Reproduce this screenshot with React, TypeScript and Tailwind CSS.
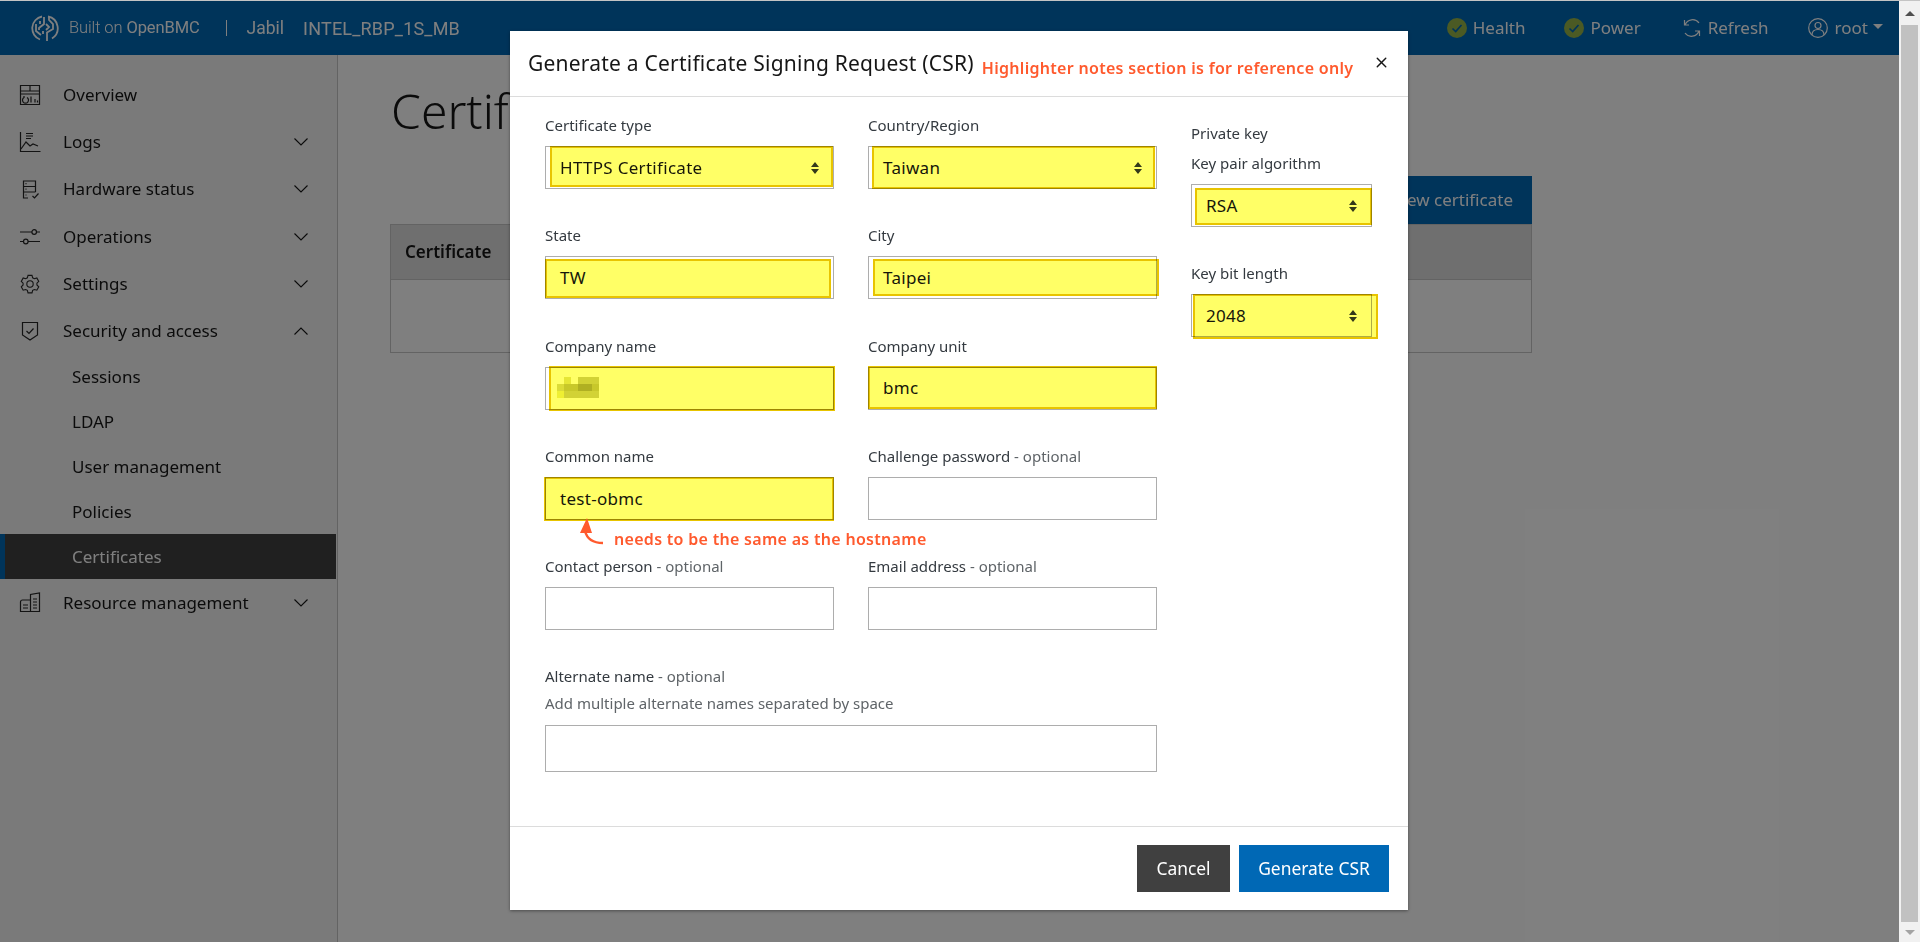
import React from "react";
import { X } from "lucide-react";

const Chevron = ({ up = false }: { up?: boolean }) => (
  <svg width="14" height="8" viewBox="0 0 14 8" fill="none" stroke="#161616" strokeWidth="1.1" className="shrink-0">
    {up ? <path d="M.5 7.5 7 1l6.500 6.500" /> : <path d="M.5.5 7 7 13.500.5" />}
  </svg>
);

const I = ({ children }: { children: React.ReactNode }) => (
  <svg width="22" height="22" viewBox="0 0 22 22" fill="none" stroke="#262626" strokeWidth="1.2" className="shrink-0">
    {children}
  </svg>
);

const icons: Record<string, React.ReactNode> = {
  overview: (
    <I>
      <path d="M1.500 1.500h19v19h-19zM1.500 7h19M11 1.500V7M1.500 10h19" />
      <path d="M8 13.500a3 3 0 1 1-3-0M5 12v2M12 12.500v6M16 15v3.500M18.500 16.500v2" />
    </I>
  ),
  logs: (
    <I>
      <path d="M1.500 1v19.500h20M7 2.500h7M7 5h7M7 7.500h5M2 18l5-7 4 4 3-2 5 2" />
    </I>
  ),
  hardware: (
    <I>
      <path d="M9 20H4.500V3h12v11M4.500 8.500h12M4.500 14h12M6.500 5.700h1M6.500 11.200h1M6.500 17h1M13.500 18l2 2 4-4.500" />
    </I>
  ),
  operations: (
    <I>
      <path d="M1 6h12M17.500 6H21M1 15.500h3.500M9 15.500h12" />
      <circle cx="15.200" cy="6" r="2.300" />
      <circle cx="6.800" cy="15.500" r="2.300" />
    </I>
  ),
  settings: (
    <I>
      <g transform="translate(1 1) scale(.91)">
        <circle cx="11" cy="11" r="3.500" />
        <path d="M8.800 1.500h4.400l.7 2.700 1.900 1 2.700-.8 2.100 3.800-2 1.900v2l2 1.900-2.100 3.800-2.700-.8-1.900 1-.7 2.700H8.800l-.7-2.700-1.900-1-2.700.8-2.100-3.800 2-1.900v-2l-2-1.900 2.100-3.800 2.700.8 1.900-1z" />
      </g>
    </I>
  ),
  security: (
    <I>
      <path d="M3.500 2.500h15V15L11 20l-7.500-5zM7.500 11l2.500 2.500 4.500-5" />
    </I>
  ),
  resource: (
    <I>
      <path d="M11.500 19.500V2.500L20.500 1v18.500zM11.500 8h-8A2 2 0 0 0 1.500 10v9.500h19M4 13h5M4 16h5M14 7h4M14 10h4M14 13h4M14 16h4" />
    </I>
  ),
};

const NavItem = ({
  icon,
  label,
  chevron,
  h = "h-[47px]",
}: {
  icon: string;
  label: string;
  chevron?: "up" | "down";
  h?: string;
}) => (
  <div className={"flex items-center pl-[19px] pr-[29px] text-[#161616] " + h}>
    <span className="w-[44px]">{icons[icon]}</span>
    <span className="flex-1">{label}</span>
    {chevron && <Chevron up={chevron === "up"} />}
  </div>
);

const SubItem = ({ label, active }: { label: string; active?: boolean }) => (
  <div
    className={
      active
        ? "mr-px flex h-[45px] items-center border-l-[5px] border-[#0068b5] bg-[#404040] pl-[67px] text-white"
        : "flex h-[45px] items-center pl-[72px] text-[#161616]"
    }
  >
    {label}
  </div>
);

const CheckDot = () => (
  <svg width="20" height="20" viewBox="0 0 20 20" className="shrink-0">
    <circle cx="10" cy="10" r="10" fill="#96b448" />
    <path d="M5.500 10.500 8.700 13.500 14.500 7" fill="none" stroke="#0068b5" strokeWidth="1.700" />
  </svg>
);

const SelectArrows = () => (
  <svg width="8" height="12" viewBox="0 0 8 12" fill="#343a40" className="shrink-0">
    <path d="M4 0 8 5H0zM4 12 0 7h8z" />
  </svg>
);

const Mark = ({ className }: { className: string }) => (
  <div
    className={
      "pointer-events-none absolute border-2 border-[#e8c400] bg-[#ffff66] mix-blend-multiply " + className
    }
  />
);

const Field = ({
  label,
  optional,
  value,
  select,
  mark,
  children,
}: {
  label: string;
  optional?: boolean;
  value?: string;
  select?: boolean;
  mark?: string;
  children?: React.ReactNode;
}) => (
  <div>
    <div className="-mt-px mb-[10px] h-[21px] text-[15px] leading-[21px] text-[#343a40]">
      {label}
      {optional && <span className="text-[#5f6468]"> - optional</span>}
    </div>
    <div className="relative flex h-[43px] items-center justify-between border border-[#adadad] bg-white pl-[14px] pr-[14px] text-[17px] tracking-[0.3px] text-[#161616]">
      <span>{value}</span>
      {select && <SelectArrows />}
      {children}
      {mark && <Mark className={mark} />}
    </div>
  </div>
);

const Pixelated = () => (
  <svg width="42" height="21" viewBox="0 0 42 21" className="absolute left-[11px] top-[9px]">
    <g fill="#d2d284">
      <rect x="7" y="0" width="7" height="7" fill="#e6e684" />
      <rect x="21" y="0" width="21" height="7" />
      <rect x="0" y="7" width="7" height="7" fill="#dcdc88" />
      <rect x="7" y="7" width="14" height="7" fill="#c8c868" />
      <rect x="21" y="7" width="14" height="7" fill="#b0b054" />
      <rect x="35" y="7" width="7" height="7" fill="#c8c868" />
      <rect x="0" y="14" width="7" height="7" fill="#efef80" />
      <rect x="7" y="14" width="35" height="7" />
    </g>
  </svg>
);

export default function App() {
  return (
    <div className="flex h-[942px] flex-col overflow-hidden bg-white font-['Noto_Sans',sans-serif] text-[17px]">
      <div className="h-px shrink-0 bg-[#c4c4c4]" />
      <div className="flex min-h-0 flex-1">
        <div className="relative flex min-w-0 flex-1 flex-col">
          <header className="flex h-[54px] shrink-0 items-center bg-[#0068b5] text-white">
            <svg width="28" height="28" viewBox="0 0 28 28" fill="none" stroke="#fff" strokeWidth="1.800" className="ml-[31px] shrink-0">
              <path d="M11 2.500A12 12 0 0 0 9 25.500M17 2.500A12 12 0 0 1 21 24.500" />
              <path d="M13 3v7l-5 4v2M5 10v7l5 4M9 7l0 3M18 3v3l4 4v5l-6 3.500V27M15 10l3 3-3 3M12 17v3" />
            </svg>
            <span className="ml-[10px] font-['Roboto',sans-serif] text-[16.500px] font-light tracking-[-0.1px]">
              Built on <span className="font-normal">OpenBMC</span>
            </span>
            <span className="ml-[26px] h-[16px] w-px bg-white" />
            <span className="ml-[20px] font-['Roboto',sans-serif] text-[17.500px]">Jabil</span>
            <span className="ml-[19px] font-['Roboto',sans-serif] text-[18px] tracking-[0.2px]">INTEL_RBP_1S_MB</span>
            <div className="ml-auto flex items-center pr-[16px] text-[17px]">
              <CheckDot />
              <span className="ml-[6px]">Health</span>
              <span className="ml-[39px]"><CheckDot /></span>
              <span className="ml-[6px]">Power</span>
              <svg width="20" height="20" viewBox="0 0 20 20" fill="none" stroke="#fff" strokeWidth="1.200" className="ml-[41px] shrink-0">
                <path d="M2.500 2v5h4.500M17.500 18v-5H13M3 7a8 8 0 0 1 14-2M17 13a8 8 0 0 1-14 2" />
              </svg>
              <span className="ml-[6px]">Refresh</span>
              <svg width="20" height="20" viewBox="0 0 20 20" fill="none" stroke="#fff" strokeWidth="1.200" className="ml-[39px] shrink-0">
                <circle cx="10" cy="10" r="9.300" />
                <circle cx="10" cy="7.500" r="3" />
                <path d="M4 17c0-4 2.500-5.500 6-5.500s6 1.500 6 5.500" />
              </svg>
              <span className="ml-[7px]">root</span>
              <span className="ml-[5px] mb-[3px] h-0 w-0 border-x-[5px] border-t-[5px] border-x-transparent border-t-white" />
            </div>
          </header>

          <div className="flex min-h-0 flex-1">
            <nav className="w-[338px] shrink-0 border-r border-[#c6c6c6] bg-[#f4f4f4] pt-[17px] text-[17px]">
              <NavItem icon="overview" label="Overview" h="h-[46px]" />
              <NavItem icon="logs" label="Logs" chevron="down" />
              <NavItem icon="hardware" label="Hardware status" chevron="down" h="h-[48px]" />
              <NavItem icon="operations" label="Operations" chevron="down" />
              <NavItem icon="settings" label="Settings" chevron="down" />
              <NavItem icon="security" label="Security and access" chevron="up" />
              <SubItem label="Sessions" />
              <SubItem label="LDAP" />
              <SubItem label="User management" />
              <SubItem label="Policies" />
              <SubItem label="Certificates" active />
              <NavItem icon="resource" label="Resource management" chevron="down" />
            </nav>
            <main className="w-[1194px] pl-[52px]">
              <h1 className="ml-px pt-[24px] text-[48px] font-light leading-[64px] text-[#161616]">Certificates</h1>
              <div className="mt-[33px] flex justify-end">
                <div className="flex h-[48px] items-center bg-[#0068b5] px-[19px] text-white">Add new certificate</div>
              </div>
              <div className="h-[129px] border border-[#c6c6c6]">
                <div className="flex h-[55px] items-center border-b border-[#c6c6c6] bg-[#dedede] pl-[14px] font-semibold text-[#161616]">
                  Certificate
                </div>
              </div>
            </main>
          </div>

          <div className="absolute inset-0 bg-black/50" />

          <section className="absolute left-[510px] top-[30px] flex h-[879px] w-[898px] flex-col bg-white text-[#161616] shadow-[0_1px_3px_rgba(0,0,0,0.4)]">
            <div className="flex h-[66px] shrink-0 items-center border-b border-[#dcdcdc] pl-[18px]">
              <h2 className="whitespace-nowrap text-[21px] tracking-[0.22px] text-[#161616]">Generate a Certificate Signing Request (CSR)</h2>
              <span className="ml-[8px] mt-[9px] whitespace-nowrap text-[16px] font-semibold tracking-[0.3px] text-[#ff5a2e]">
                Highlighter notes section is for reference only
              </span>
              <X size={17} strokeWidth={2} className="ml-auto mr-[18px] -mt-[2px] shrink-0 text-[#161616]" />
            </div>

            <div className="flex flex-1 pl-[35px] pt-[19px]">
              <div className="w-[612px] shrink-0">
                <div className="relative grid grid-cols-[289px_289px] auto-rows-[110.25px] gap-x-[34px]">
                  <Field label="Certificate type" value="HTTPS Certificate" select mark="left-[4px] -top-px w-[283px] h-[41px]" />
                  <Field label="Country/Region" value="Taiwan" select mark="left-[3px] -top-px w-[283px] h-[43px]" />
                  <Field label="State" value="TW" mark="-left-px top-[2px] w-[286px] h-[39px]" />
                  <Field label="City" value="Taipei" mark="left-[4px] top-[2px] w-[286px] h-[37px]" />
                  <Field label="Company name" mark="left-[3px] -top-[2px] w-[286px] h-[45px]">
                    <Pixelated />
                  </Field>
                  <Field label="Company unit" value="bmc" mark="-left-px -top-[2px] w-[289px] h-[43px]" />
                  <div className="relative">
                    <Field label="Common name" value="test-obmc" mark="-left-[2px] -top-px w-[290px] h-[44px]" />
                    <svg width="32" height="30" viewBox="0 0 32 30" className="absolute left-[30px] top-[71px]" fill="none">
                      <path d="M16 0 9 15l4 0 0 0 8 0z" fill="#ff5a2e" transform="translate(-4 0)" />
                      <path d="M10 13c2 8 8 12 18 12" stroke="#ff5a2e" strokeWidth="2.400" />
                    </svg>
                    <span className="absolute left-[69px] top-[80px] whitespace-nowrap text-[16px] font-semibold tracking-[0.3px] text-[#ff5a2e]">
                      needs to be the same as the hostname
                    </span>
                  </div>
                  <Field label="Challenge password" optional />
                  <Field label="Contact person" optional />
                  <Field label="Email address" optional />
                </div>
                <div className="-mt-px h-[21px] text-[15px] leading-[21px] text-[#343a40]">
                  Alternate name<span className="text-[#5f6468]"> - optional</span>
                </div>
                <div className="mt-[6px] text-[15px] leading-[21px] text-[#5f6468]">
                  Add multiple alternate names separated by space
                </div>
                <div className="mt-[11px] h-[47px] border border-[#adadad]" />
              </div>

              <div className="ml-[34px] w-[181px] shrink-0 pt-[7px]">
                <div className="text-[15px] leading-[21px] text-[#343a40]">Private key</div>
                <div className="mt-[10px]">
                  <Field label="Key pair algorithm" value="RSA" select mark="left-[3px] top-[3px] w-[177px] h-[37px]" />
                </div>
                <div className="mt-[37px]">
                  <Field label="Key bit length" value="2048" select mark="left-px -top-px w-[185px] h-[45px]" />
                </div>
              </div>
            </div>

            <div className="flex h-[84px] shrink-0 items-start justify-end gap-[9px] border-t border-[#dcdcdc] pr-[19px] pt-[18px] text-[17.400px] text-white">
              <div className="flex h-[47px] w-[93px] items-center justify-center bg-[#404040]">Cancel</div>
              <div className="flex h-[47px] w-[150px] items-center justify-center bg-[#0068b5]">Generate CSR</div>
            </div>
          </section>
        </div>

        <aside className="flex w-[21px] shrink-0 flex-col items-center bg-[#f1f1f1]">
          <div className="flex h-[24px] items-center">
            <span className="h-0 w-0 border-x-[5px] border-b-[5px] border-x-transparent border-b-[#505050]" />
          </div>
          <div className="h-[897px] w-[17px] bg-[#c1c1c1]" />
          <div className="flex flex-1 items-center">
            <span className="h-0 w-0 border-x-[5px] border-t-[5px] border-x-transparent border-t-[#a3a3a3]" />
          </div>
        </aside>
      </div>
    </div>
  );
}
